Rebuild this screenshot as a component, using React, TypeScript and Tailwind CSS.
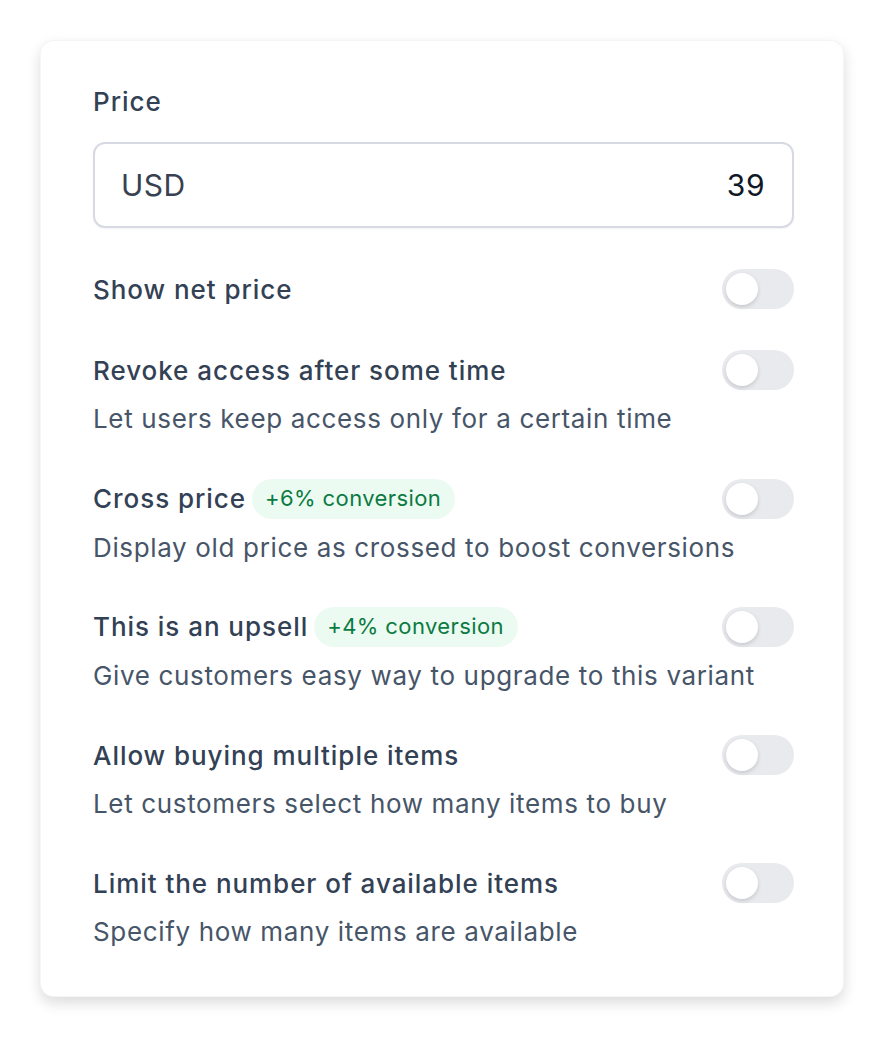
const items = [
  { label: "Revoke access after some time", desc: "Let users keep access only for a certain time" },
  { label: "Cross price", badge: "+6% conversion", desc: "Display old price as crossed to boost conversions" },
  { label: "This is an upsell", badge: "+4% conversion", desc: "Give customers easy way to upgrade to this variant" },
  { label: "Allow buying multiple items", desc: "Let customers select how many items to buy" },
  { label: "Limit the number of available items", desc: "Specify how many items are available" },
];

const Toggle = () => (
  <div className="w-[72px] h-[40px] shrink-0 rounded-full bg-[#e9eaee] p-[4px] flex items-center">
    <div className="w-[32px] h-[32px] rounded-full bg-white shadow-[0_2px_4px_rgba(0,0,0,0.15)]" />
  </div>
);

const App = () => {
  return (
    <div className="min-h-screen bg-white p-[40px] font-['Inter',sans-serif]">
      <div className="w-[804px] rounded-[14px] bg-white border border-black/[0.04] shadow-[0_6px_14px_rgba(0,0,0,0.14)] pl-[52px] pr-[49px] pt-[43px] pb-[46px]">
        <div className="text-[26px] leading-[36px] font-medium tracking-[0.95px] text-[#334155]">Price</div>
        <div className="mt-[22px] h-[86px] rounded-[12px] border-2 border-[#d7dae3] shadow-[0_1px_2px_rgba(0,0,0,0.05)] flex items-center justify-between pl-[26px] pr-[27px]">
          <span className="text-[30px] tracking-[0.5px] text-[#374151]">USD</span>
          <span className="text-[30px] tracking-[0.5px] text-[#111827]">39</span>
        </div>

        <div className="mt-[41px] flex items-center justify-between h-[40px]">
          <span className="text-[26px] font-medium tracking-[0.95px] text-[#334155]">Show net price</span>
          <Toggle />
        </div>

        {items.map((it) => (
          <div key={it.label} className="mt-[41.25px]">
            <div className="flex items-center justify-between h-[40px]">
              <div className="flex items-center gap-[6px]">
                <span className="text-[26px] font-medium tracking-[0.95px] text-[#334155]">{it.label}</span>
                {it.badge && (
                  <span className="h-[40px] pl-[13px] pr-[14px] rounded-full bg-[#ebfbf1] text-[#0b7a43] text-[22px] tracking-[0.4px] flex items-center">
                    {it.badge}
                  </span>
                )}
              </div>
              <Toggle />
            </div>
            <div className="mt-[11px] text-[26px] leading-[36px] tracking-[0.65px] text-[#475569]">{it.desc}</div>
          </div>
        ))}
      </div>
    </div>
  );
};

export default App;
